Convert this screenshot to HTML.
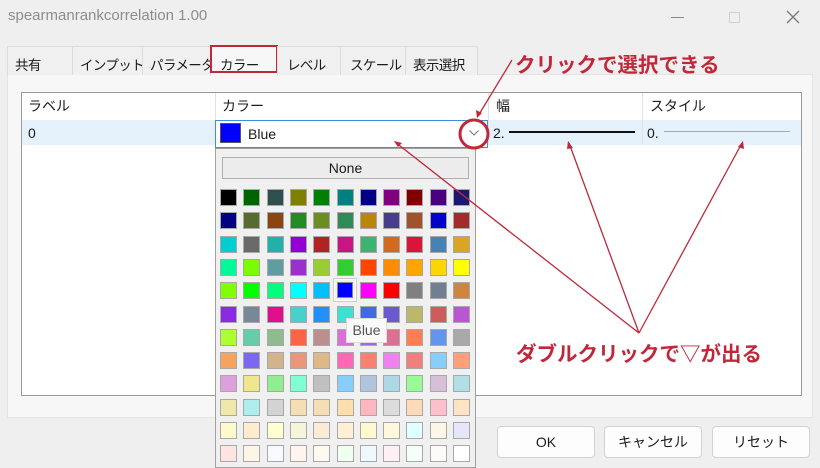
<!DOCTYPE html>
<html><head><meta charset="utf-8"><style>
*{margin:0;padding:0;box-sizing:border-box}
body{width:820px;height:462px;overflow:hidden;background:#efefef;font-family:"Liberation Sans","Noto Sans CJK JP",sans-serif;position:relative;color:#1a1a1a}
.a{position:absolute;white-space:nowrap}
.title{left:8px;top:7px;font-size:15px;color:#8c8c8c}
.tab{top:46px;height:29px;background:#f0f0f0;border:1px solid #dcdcdc;border-bottom:none;font-size:13.5px;padding:7px 0 0 7px;letter-spacing:-0.6px}
.panel{left:7px;top:74px;width:806px;height:344px;background:#f7f7f7;border:1px solid #e4e4e4}
.tbl{left:21px;top:92px;width:781px;height:304px;background:#fff;border:1px solid #9a9a9a}
.hd{top:96px;font-size:14px}
.btn{top:426px;width:98px;height:32px;background:#fdfdfd;border:1px solid #d2d2d2;border-radius:4px;font-size:14px;text-align:center;line-height:30px}
.sw{position:absolute;width:17px;height:17px;border:1px solid #a8a8a8}
.red{color:#c0283a;font-weight:bold}
</style></head><body>
<div class="a title">spearmanrankcorrelation 1.00</div>
<div class="a" style="left:671px;top:17px;width:13px;height:1px;background:#8a8a8a"></div>
<div class="a" style="left:729px;top:12px;width:11px;height:11px;border:1px solid #cfcfcf"></div>
<svg class="a" style="left:786px;top:10px" width="14" height="14" stroke="#7a7a7a" stroke-width="1.3"><path d="M1 1L13 13M13 1L1 13"/></svg>
<div class="a panel"></div>
<div class="a tab" style="left:7px;width:66px">共有</div>
<div class="a tab" style="left:72px;width:71px">インプット</div>
<div class="a tab" style="left:142px;width:69px">パラメータ</div>
<div class="a tab" style="left:210px;width:68px;background:#f7f7f7;height:30px;padding-left:9px">カラー</div>
<div class="a" style="left:210px;top:45px;width:68px;height:28px;border:2px solid #c0283a"></div>
<div class="a tab" style="left:277px;width:64px;padding-left:9px">レベル</div>
<div class="a tab" style="left:340px;width:66px;padding-left:9px">スケール</div>
<div class="a tab" style="left:405px;width:73px">表示選択</div>
<div class="a tbl"></div>
<div class="a" style="left:22px;top:120px;width:779px;height:25px;background:#e5f1fb"></div>
<div class="a" style="left:215px;top:93px;width:1px;height:52px;background:#e2e2e2"></div>
<div class="a" style="left:488px;top:93px;width:1px;height:52px;background:#e2e2e2"></div>
<div class="a" style="left:642px;top:93px;width:1px;height:52px;background:#e2e2e2"></div>
<div class="a hd" style="left:28px">ラベル</div>
<div class="a hd" style="left:222px">カラー</div>
<div class="a hd" style="left:496px">幅</div>
<div class="a hd" style="left:650px">スタイル</div>
<div class="a" style="left:28px;top:125px;font-size:14px">0</div>
<div class="a" style="left:215px;top:120px;width:273px;height:28px;background:#fff;border:1px solid #3c8ee0"></div>
<div class="a" style="left:220px;top:123px;width:21px;height:20px;background:#0000ff;border:1px solid #555"></div>
<div class="a" style="left:248px;top:126px;font-size:14px">Blue</div>
<svg class="a" style="left:469px;top:130px" width="10" height="6" fill="none" stroke="#777"><path d="M0.5 0.5L5 5L9.5 0.5"/></svg>
<div class="a" style="left:493px;top:125px;font-size:14px">2.</div>
<div class="a" style="left:509px;top:131px;width:126px;height:2px;background:#111"></div>
<div class="a" style="left:647px;top:125px;font-size:14px">0.</div>
<div class="a" style="left:664px;top:131px;width:126px;height:1px;background:#aaa"></div>
<div class="a" style="left:0;top:418px;width:820px;height:44px;background:#efefef"></div>
<div class="a" style="left:215px;top:148px;width:261px;height:320px;background:#f0f0f0;border:1px solid #a0a0a0"></div>
<div class="a" style="left:222px;top:157px;width:247px;height:22px;border:1px solid #b0b0b0;background:#ececec;font-size:14px;text-align:center;line-height:20px">None</div>
<div id="pal2"></div>
<div class="a" style="left:334px;top:279px;width:22px;height:22px;background:#f0f0f0;border:1px solid #fff;box-shadow:0 0 0 1px #ccc"></div>
<div class="a" style="left:337px;top:282px;width:16px;height:16px;background:#0000ff;border:1px solid #888"></div>
<div class="a" style="left:346px;top:318px;width:41px;height:25px;background:#f9f9f9;border:1px solid #ddd;font-size:14px;color:#555;text-align:center;line-height:23px">Blue</div>
<div class="a btn" style="left:497px">OK</div>
<div class="a btn" style="left:604px">キャンセル</div>
<div class="a btn" style="left:712px">リセット</div>
<div class="a red" style="left:515px;top:48px;font-size:20.5px">クリックで選択できる</div>
<div class="a red" style="left:516px;top:337px;font-size:20.5px">ダブルクリックで▽が出る</div>
<svg class="a" style="left:0;top:0" width="820" height="462" fill="none" stroke="#c0283a">
<circle cx="474" cy="134" r="14" stroke-width="3"/>
<g stroke-width="1.3">
<line x1="512" y1="60" x2="478" y2="116"/>
<line x1="639" y1="333" x2="395" y2="142"/>
<line x1="639" y1="333" x2="569" y2="143"/>
<line x1="639" y1="333" x2="742" y2="143"/>
</g>
<g fill="#c0283a" stroke="none">
<polygon points="477,118 476,110 482,113"/>
<polygon points="394,141 402,143 398,147"/>
<polygon points="568,141 567,149 573,148"/>
<polygon points="743,141 738,147 744,149"/>
</g>
</svg>
<script>
var c=[
"#000000 #006400 #2f4f4f #808000 #008000 #008080 #000080 #800080 #800000 #4b0082 #191970",
"#000080 #556b2f #8b4513 #228b22 #6b8e23 #2e8b57 #b8860b #483d8b #a0522d #0000cd #a52a2a",
"#00ced1 #696969 #20b2aa #9400d3 #b22222 #c71585 #3cb371 #d2691e #dc143c #4682b4 #daa520",
"#00fa9a #7cfc00 #5f9ea0 #9932cc #9acd32 #32cd32 #ff4500 #ff8c00 #ffa500 #ffd700 #ffff00",
"#7fff00 #00ff00 #00ff7f #00ffff #00bfff #0000ff #ff00ff #ff0000 #808080 #708090 #cd853f",
"#8a2be2 #778899 #e0108c #48d1cc #1e90ff #40e0d0 #4169e1 #6a5acd #bdb76b #cd5c5c #ba55d3",
"#adff2f #66cdaa #8fbc8f #ff6347 #bc8f8f #da70d6 #9370db #db7093 #ff7f50 #6495ed #a9a9a9",
"#f4a460 #7b68ee #d2b48c #e9967a #deb887 #ff69b4 #fa8072 #ee82ee #f08080 #87cefa #ffa07a",
"#dda0dd #f0e68c #90ee90 #7fffd4 #c0c0c0 #87cefa #b0c4de #add8e6 #98fb98 #d8bfd8 #b0e0e6",
"#eee8aa #afeeee #d3d3d3 #f5deb3 #f5deb3 #ffdead #ffb6c1 #dcdcdc #ffdab9 #ffc0cb #ffe4c4",
"#fffacd #ffebcd #ffffd0 #f5f5dc #faebd7 #ffefd5 #fffacd #fff8dc #e0ffff #fdf5e6 #e6e6fa",
"#ffe4e1 #fdf5e6 #f8f8ff #fff5ee #fffaf0 #f0fff0 #f0f8ff #fff0f5 #f5fffa #fffafa #ffffff"];
var h="";
for(var r=0;r<12;r++){var a=c[r].split(" ");for(var k=0;k<11;k++){
h+='<div class="sw" style="left:'+(220+k*23.3).toFixed(1)+'px;top:'+(189+r*23.3).toFixed(1)+'px;background:'+a[k]+'"></div>';}}
document.getElementById("pal2").innerHTML=h;
</script>
</body></html>
